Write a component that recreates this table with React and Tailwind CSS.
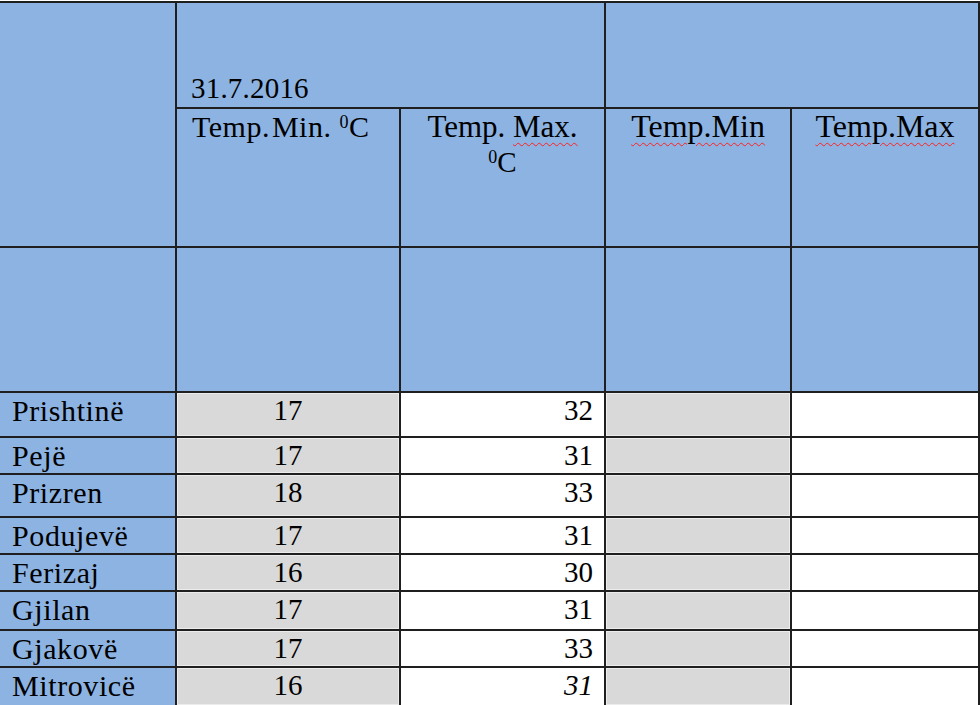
const ROWS = [
  { name: 'Prishtinë', min: '17', max: '32' },
  { name: 'Pejë', min: '17', max: '31' },
  { name: 'Prizren', min: '18', max: '33' },
  { name: 'Podujevë', min: '17', max: '31' },
  { name: 'Ferizaj', min: '16', max: '30' },
  { name: 'Gjilan', min: '17', max: '31' },
  { name: 'Gjakovë', min: '17', max: '33' },
  { name: 'Mitrovicë', min: '16', max: '31', italic: true },
];

const Deg = () => (
  <>
    <span className="relative -top-[9px] text-[18px]">0</span>C
  </>
);

const squiggle = 'underline decoration-wavy decoration-[#ff2020] decoration-1 underline-offset-[5px]';

const App = () => {
  return (
    <div className="w-[980px] h-[705px] bg-white pt-[1px] overflow-hidden font-['Liberation_Serif',serif] text-[29px] leading-[35px] text-black">
      <div className="grid grid-cols-[175px_222px_203px_184px_186px] grid-rows-[104px_137px_143px_43px_35px_41px_35px_35px_37px_35px_37px] gap-[2px] bg-[#1f1f1f] pt-[2px] pr-[2px]">
        {/* header block */}
        <div className="row-span-2 bg-[#8db3e2]" />
        <div className="col-span-2 bg-[#8db3e2] flex items-end pl-[14px] pb-[1px] leading-[36px] tracking-[0.2px]">31.7.2016</div>
        <div className="col-span-2 bg-[#8db3e2]" />

        <div className="bg-[#8db3e2] pl-[15px] text-[30px] leading-[35px] tracking-[0.5px] whitespace-nowrap">
          Temp.<span className="ml-[2px]">Min.</span> <Deg />
        </div>
        <div className="bg-[#8db3e2] text-center text-[31px] leading-[35px]">
          Temp. <span className={squiggle}>Max.</span>
          <br />
          <span className="text-[29px]"><Deg /></span>
        </div>
        <div className="bg-[#8db3e2] text-center text-[32px] leading-[34px]">
          <span className={squiggle}>Temp.Min</span>
        </div>
        <div className="bg-[#8db3e2] text-center text-[32px] leading-[34px]">
          <span className={squiggle}>Temp.Max</span>
        </div>

        {/* blank blue row */}
        <div className="bg-[#8db3e2]" />
        <div className="bg-[#8db3e2]" />
        <div className="bg-[#8db3e2]" />
        <div className="bg-[#8db3e2]" />
        <div className="bg-[#8db3e2]" />

        {ROWS.map((r) => (
          <div key={r.name} className="contents">
            <div className="bg-[#8db3e2] pl-[12px] text-[30px] tracking-[0.6px]">{r.name}</div>
            <div className="bg-[#d9d9d9] shadow-[inset_0_0_0_1px_#ececec] text-center">{r.min}</div>
            <div className={`bg-white text-right pr-[11px] ${r.italic ? 'italic' : ''}`}>{r.max}</div>
            <div className="bg-[#d9d9d9] shadow-[inset_0_0_0_1px_#ececec]" />
            <div className="bg-white" />
          </div>
        ))}
      </div>
    </div>
  );
};

export default App;
